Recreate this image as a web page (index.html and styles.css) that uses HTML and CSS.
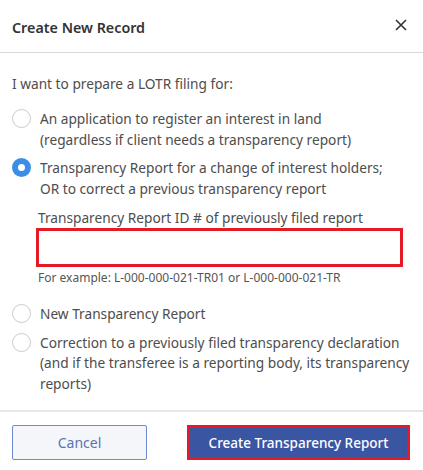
FILE: index.html
```html
<!DOCTYPE html>
<html lang="en">
<head>
<meta charset="utf-8">
<title>Create New Record</title>
<link rel="stylesheet" href="styles.css">
</head>
<body>
<div class="dialog">
  <div class="header">
    <h1 class="title">Create New Record</h1>
    <button class="close" aria-label="Close">
      <svg width="12" height="12" viewBox="0 0 12 12"><path d="M1 1L11 11M11 1L1 11" stroke="#333" stroke-width="1.6" fill="none"/></svg>
    </button>
  </div>
  <div class="content">
    <p class="intro">I want to prepare a LOTR filing for:</p>
    <div class="options">
      <label class="option"><span class="radio"></span><span class="text">An application to register an interest in land<br>(regardless if client needs a transparency report)</span></label>
      <div class="option-group">
        <label class="option"><span class="radio checked"></span><span class="text">Transparency Report for a change of interest holders;<br>OR to correct a previous transparency report</span></label>
        <div class="sub">
          <div class="sub-label">Transparency Report ID # of previously filed report</div>
          <div class="input"></div>
          <div class="hint">For example: L-000-000-021-TR01 or L-000-000-021-TR</div>
        </div>
      </div>
      <label class="option"><span class="radio"></span><span class="text">New Transparency Report</span></label>
      <label class="option"><span class="radio"></span><span class="text">Correction to a previously filed transparency declaration<br>(and if the transferee is a reporting body, its transparency<br>reports)</span></label>
    </div>
  </div>
  <div class="footer">
    <button class="btn btn-cancel">Cancel</button>
    <button class="btn btn-primary">Create Transparency Report</button>
  </div>
</div>
</body>
</html>
```
FILE: styles.css
```css
* { box-sizing: border-box; }
html, body { margin: 0; padding: 0; background: #fff; }
body {
  font-family: "Noto Sans", "Open Sans", sans-serif;
  color: #4d4d4d;
  width: 423px;
  height: 470px;
  overflow: hidden;
}
.dialog { display: flex; flex-direction: column; }
.header {
  height: 53px;
  display: flex;
  align-items: center;
  justify-content: space-between;
  padding: 4px 16px 0 12px;
  border-bottom: 1px solid #ddd7d8;
}
.title {
  margin: 0;
  font-size: 14.3px;
  font-weight: 600;
  color: #333;
  line-height: 20px;
}
.close {
  border: 0;
  background: none;
  padding: 0;
  width: 12px;
  height: 12px;
  display: flex;
  margin-bottom: 7px;
}
.content { padding: 21px 12px 16px 12px; }
.intro { margin: 0 0 15px 0; font-size: 13.7px; line-height: 20px; }
.options { display: flex; flex-direction: column; gap: 8px; }
.option { display: flex; align-items: flex-start; gap: 9px; font-size: 13.7px; line-height: 20.5px; }
.text { white-space: nowrap; }
.radio {
  flex: none;
  width: 19px;
  height: 19px;
  border-radius: 50%;
  border: 1px solid #c8cbd0;
  background: #fff;
  margin-top: 0;
}
.radio.checked { border: 6px solid #3a8ee6; }
.sub { padding-left: 24px; margin-top: 9px; margin-bottom: 10px; }
.sub-label { font-size: 13.7px; line-height: 20px; padding-left: 2px; }
.input {
  height: 39px;
  width: 367px;
  border: 3px solid #e41b25;
  background: #fff;
}
.hint { font-size: 12px; line-height: 16px; margin-top: 3px; padding-left: 2px; color: #555; white-space: nowrap; }
.footer {
  border-top: 2px solid #e4e7eb;
  display: flex;
  justify-content: space-between;
  padding: 13px 13px 0 12px;
}
.btn {
  height: 35px;
  font-family: "Noto Sans", "Open Sans", sans-serif;
  font-size: 13.5px;
  cursor: pointer;
}
.btn-cancel {
  width: 135px;
  background: #f5f6fa;
  border: 1px solid #6d89cf;
  border-radius: 2px;
  color: #5a72b5;
  font-size: 14px;
}
.btn-primary {
  width: 223px;
  background: #3a55a1;
  border: 3px solid #e41b25;
  color: #fff;
  font-weight: 500;
}
```
